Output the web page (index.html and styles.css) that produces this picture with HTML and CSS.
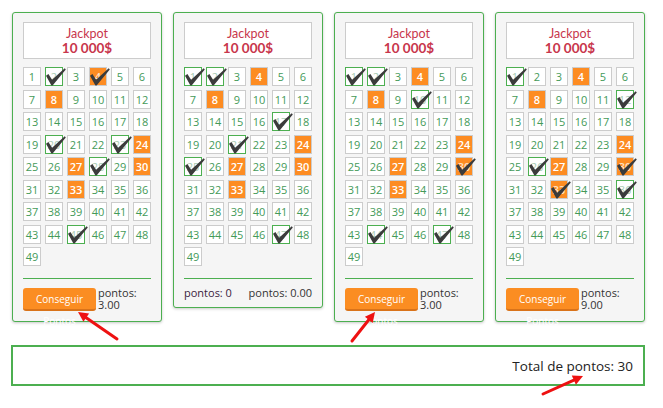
FILE: index.html
```html
<!DOCTYPE html>
<html>
<head>
<meta charset="utf-8">
<link rel="stylesheet" href="styles.css">
</head>
<body>
<svg class="defs" aria-hidden="true">
  <symbol id="chk" viewBox="0 0 20 18">
    <polygon points="0,7.8 2.4,6 6.1,11.7 18.7,0.3 19.8,1.5 6.6,17.6 5.4,17.6"/>
  </symbol>
</svg>
<div class="page">
  <div class="cards">
    <div class="card">
      <div class="jackpot"><div class="jp-title">Jackpot</div><div class="jp-amount">10 000$</div></div>
      <div class="grid">
        <span class="n">1</span><span class="n k">2<svg class="chk"><use href="#chk"/></svg></span><span class="n">3</span><span class="n o ok">4<svg class="chk"><use href="#chk"/></svg></span><span class="n">5</span><span class="n">6</span>
        <span class="n">7</span><span class="n o">8</span><span class="n">9</span><span class="n">10</span><span class="n">11</span><span class="n">12</span>
        <span class="n">13</span><span class="n">14</span><span class="n">15</span><span class="n">16</span><span class="n">17</span><span class="n">18</span>
        <span class="n">19</span><span class="n k">20<svg class="chk"><use href="#chk"/></svg></span><span class="n">21</span><span class="n">22</span><span class="n k">23<svg class="chk"><use href="#chk"/></svg></span><span class="n o">24</span>
        <span class="n">25</span><span class="n">26</span><span class="n o">27</span><span class="n k">28<svg class="chk"><use href="#chk"/></svg></span><span class="n">29</span><span class="n o">30</span>
        <span class="n">31</span><span class="n">32</span><span class="n o">33</span><span class="n">34</span><span class="n">35</span><span class="n">36</span>
        <span class="n">37</span><span class="n">38</span><span class="n">39</span><span class="n">40</span><span class="n">41</span><span class="n">42</span>
        <span class="n">43</span><span class="n">44</span><span class="n k">45<svg class="chk"><use href="#chk"/></svg></span><span class="n">46</span><span class="n">47</span><span class="n">48</span>
        <span class="n">49</span>
      </div>
      <div class="sep"></div>
      <div class="footer"><button class="btn">Conseguir Pontos</button><span class="pts">pontos: 3.00</span></div>
    </div>

    <div class="card short">
      <div class="jackpot"><div class="jp-title">Jackpot</div><div class="jp-amount">10 000$</div></div>
      <div class="grid">
        <span class="n k">1<svg class="chk"><use href="#chk"/></svg></span><span class="n k">2<svg class="chk"><use href="#chk"/></svg></span><span class="n">3</span><span class="n o">4</span><span class="n">5</span><span class="n">6</span>
        <span class="n">7</span><span class="n o">8</span><span class="n">9</span><span class="n">10</span><span class="n">11</span><span class="n">12</span>
        <span class="n">13</span><span class="n">14</span><span class="n">15</span><span class="n">16</span><span class="n k">17<svg class="chk"><use href="#chk"/></svg></span><span class="n">18</span>
        <span class="n">19</span><span class="n">20</span><span class="n k">21<svg class="chk"><use href="#chk"/></svg></span><span class="n">22</span><span class="n">23</span><span class="n o">24</span>
        <span class="n k">25<svg class="chk"><use href="#chk"/></svg></span><span class="n">26</span><span class="n o">27</span><span class="n">28</span><span class="n">29</span><span class="n o">30</span>
        <span class="n">31</span><span class="n">32</span><span class="n o">33</span><span class="n">34</span><span class="n">35</span><span class="n">36</span>
        <span class="n">37</span><span class="n">38</span><span class="n">39</span><span class="n">40</span><span class="n">41</span><span class="n">42</span>
        <span class="n">43</span><span class="n">44</span><span class="n">45</span><span class="n">46</span><span class="n k">47<svg class="chk"><use href="#chk"/></svg></span><span class="n">48</span>
        <span class="n">49</span>
      </div>
      <div class="sep"></div>
      <div class="footer split"><span class="p0">pontos: 0</span><span>pontos: 0.00</span></div>
    </div>

    <div class="card">
      <div class="jackpot"><div class="jp-title">Jackpot</div><div class="jp-amount">10 000$</div></div>
      <div class="grid">
        <span class="n k">1<svg class="chk"><use href="#chk"/></svg></span><span class="n k">2<svg class="chk"><use href="#chk"/></svg></span><span class="n">3</span><span class="n o">4</span><span class="n">5</span><span class="n">6</span>
        <span class="n">7</span><span class="n o">8</span><span class="n">9</span><span class="n k">10<svg class="chk"><use href="#chk"/></svg></span><span class="n">11</span><span class="n">12</span>
        <span class="n">13</span><span class="n">14</span><span class="n">15</span><span class="n">16</span><span class="n">17</span><span class="n">18</span>
        <span class="n">19</span><span class="n">20</span><span class="n">21</span><span class="n">22</span><span class="n">23</span><span class="n o">24</span>
        <span class="n">25</span><span class="n">26</span><span class="n o">27</span><span class="n">28</span><span class="n">29</span><span class="n o ok">30<svg class="chk"><use href="#chk"/></svg></span>
        <span class="n">31</span><span class="n">32</span><span class="n o">33</span><span class="n">34</span><span class="n">35</span><span class="n">36</span>
        <span class="n">37</span><span class="n">38</span><span class="n">39</span><span class="n">40</span><span class="n">41</span><span class="n">42</span>
        <span class="n">43</span><span class="n k">44<svg class="chk"><use href="#chk"/></svg></span><span class="n">45</span><span class="n">46</span><span class="n k">47<svg class="chk"><use href="#chk"/></svg></span><span class="n">48</span>
        <span class="n">49</span>
      </div>
      <div class="sep"></div>
      <div class="footer"><button class="btn">Conseguir Pontos</button><span class="pts">pontos: 3.00</span></div>
    </div>

    <div class="card">
      <div class="jackpot"><div class="jp-title">Jackpot</div><div class="jp-amount">10 000$</div></div>
      <div class="grid">
        <span class="n k">1<svg class="chk"><use href="#chk"/></svg></span><span class="n">2</span><span class="n">3</span><span class="n o">4</span><span class="n">5</span><span class="n">6</span>
        <span class="n">7</span><span class="n o">8</span><span class="n">9</span><span class="n">10</span><span class="n">11</span><span class="n k">12<svg class="chk"><use href="#chk"/></svg></span>
        <span class="n">13</span><span class="n">14</span><span class="n">15</span><span class="n">16</span><span class="n">17</span><span class="n">18</span>
        <span class="n">19</span><span class="n">20</span><span class="n">21</span><span class="n">22</span><span class="n">23</span><span class="n o">24</span>
        <span class="n">25</span><span class="n k">26<svg class="chk"><use href="#chk"/></svg></span><span class="n o">27</span><span class="n">28</span><span class="n">29</span><span class="n o ok">30<svg class="chk"><use href="#chk"/></svg></span>
        <span class="n">31</span><span class="n">32</span><span class="n o ok">33<svg class="chk"><use href="#chk"/></svg></span><span class="n">34</span><span class="n">35</span><span class="n k">36<svg class="chk"><use href="#chk"/></svg></span>
        <span class="n">37</span><span class="n">38</span><span class="n">39</span><span class="n">40</span><span class="n">41</span><span class="n">42</span>
        <span class="n">43</span><span class="n">44</span><span class="n">45</span><span class="n">46</span><span class="n">47</span><span class="n">48</span>
        <span class="n">49</span>
      </div>
      <div class="sep"></div>
      <div class="footer"><button class="btn">Conseguir Pontos</button><span class="pts">pontos: 9.00</span></div>
    </div>
  </div>

  <div class="total">Total de pontos: 30</div>

  <svg class="arrows" width="663" height="408" viewBox="0 0 663 408" aria-hidden="true">
    <line x1="117" y1="339" x2="86.2" y2="317.7"/>
    <polygon points="78,312 89.1,313.6 83.4,321.8"/>
    <line x1="352" y1="341" x2="368.8" y2="319.8"/>
    <polygon points="375,312 372.7,322.9 364.9,316.7"/>
    <line x1="543" y1="394" x2="573.9" y2="380.1"/>
    <polygon points="583,376 575.9,384.7 571.8,375.5"/>
  </svg>
</div>
</body>
</html>
```

FILE: styles.css
```css
html, body {
  margin: 0;
  padding: 0;
  background: #ffffff;
}

body {
  font-family: "Open Sans", "Liberation Sans", sans-serif;
  color: #333333;
}

.defs {
  position: absolute;
  width: 0;
  height: 0;
  overflow: hidden;
}

.page {
  position: relative;
  width: 663px;
  height: 408px;
  box-sizing: border-box;
  padding: 12px 0 0 11px;
}

.cards {
  display: flex;
  align-items: flex-start;
  gap: 11px;
  margin-left: 1px;
}

.card {
  width: 150px;
  box-sizing: border-box;
  border: 1px solid #4caf50;
  border-radius: 3px;
  background: #f5f5f5;
  box-shadow: 0 1px 3px rgba(0, 0, 0, 0.22);
  padding: 9px 10px 10px 10px;
}

.card.short {
  padding-bottom: 8px;
}

.jackpot {
  height: 37px;
  box-sizing: border-box;
  border: 1px solid #cccccc;
  background: #ffffff;
  display: flex;
  flex-direction: column;
  justify-content: center;
  align-items: center;
  color: #c8364c;
  font-family: Lato, "Open Sans", sans-serif;
}

.jp-title {
  font-size: 12.5px;
  line-height: 15px;
}

.jp-amount {
  font-size: 13.5px;
  line-height: 15px;
  font-weight: 700;
}

.grid {
  margin-top: 8px;
  display: grid;
  grid-template-columns: repeat(6, 18px);
  grid-auto-rows: 19px;
  row-gap: 3.5px;
  justify-content: space-between;
}

.n {
  position: relative;
  box-sizing: border-box;
  border: 1px solid #cccccc;
  background: #ffffff;
  color: #449a58;
  font-size: 11px;
  line-height: 17px;
  text-align: center;
}

.n.o {
  background: #fd8c22;
  color: #ffffff;
  font-weight: 600;
}

.n.k {
  border-color: #4caf50;
  color: #a9cbb2;
}

.n.ok {
  color: #ffe2c6;
}

.chk {
  position: absolute;
  left: 0;
  top: 0;
  width: 20px;
  height: 18px;
  fill: #3b3b3b;
  overflow: visible;
}

.sep {
  margin-top: 12px;
  height: 1px;
  background: #4caf50;
}

.footer {
  margin-top: 9px;
  display: flex;
  align-items: flex-start;
}

.footer.split {
  margin-top: 7px;
  justify-content: space-between;
  font-size: 11px;
  line-height: 13px;
  color: #333333;
}

.p0 {
  color: #3a2340;
}

.btn {
  flex: none;
  width: 73px;
  height: 23px;
  padding: 0 4px;
  margin: 0;
  border: none;
  border-bottom: 2px solid #d9731a;
  border-radius: 3px;
  background: #fb8d22;
  color: #ffffff;
  font-family: "Open Sans", "Liberation Sans", sans-serif;
  font-size: 10px;
  line-height: 22px;
  text-align: center;
  overflow: visible;
  display: block;
}

.pts {
  margin: -1px 0 0 2px;
  font-size: 11px;
  line-height: 12px;
  color: #333333;
}

.total {
  margin-top: 23px;
  width: 634px;
  height: 41px;
  box-sizing: border-box;
  border: 2px solid #4caf50;
  display: flex;
  align-items: center;
  justify-content: flex-end;
  padding-right: 10px;
  font-size: 13.5px;
  color: #222222;
}

.arrows {
  position: absolute;
  left: 0;
  top: 0;
  pointer-events: none;
}

.arrows line {
  stroke: #ee1111;
  stroke-width: 3;
  stroke-linecap: round;
}

.arrows polygon {
  fill: #ee1111;
}
```
